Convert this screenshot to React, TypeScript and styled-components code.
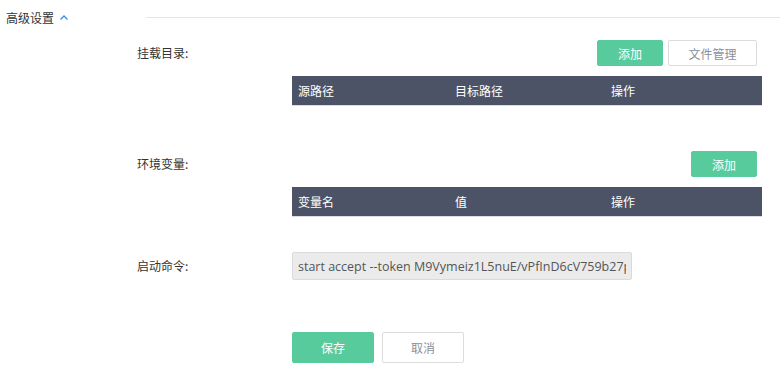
import styled, { createGlobalStyle } from "styled-components";

const GlobalStyle = createGlobalStyle`
    body {
        margin: 0;
        background: #fff;
        font-family: "Noto Sans CJK SC", "Microsoft YaHei", sans-serif;
        color: #333;
    }
`;

const Page = styled.div`
    width: 780px;
    height: 385px;
    overflow: hidden;
`;
const Header = styled.div`
    display: flex;
    align-items: center;
    height: 35px;
`;
const HeaderTitle = styled.div`
    width: 140px;
    padding-left: 6px;
    display: flex;
    align-items: center;
    gap: 5px;
    font-size: 12px;
    color: #333;
    svg {
        width: 10px;
        height: 10px;
    }
`;
const HeaderLine = styled.div`
    flex: 1;
    height: 1px;
    background: #e6e6e6;
    margin-top: -1px;
`;
const Form = styled.div`
    padding-left: 137px;
    width: 625px;
`;
const Row = styled.div<{ $top: number }>`
    display: flex;
    margin-top: ${(p) => p.$top}px;
`;
const Label = styled.div<{ $h: number }>`
    width: 155px;
    flex-shrink: 0;
    height: ${(p) => p.$h}px;
    line-height: ${(p) => p.$h}px;
    font-size: 12px;
    color: #333;
`;
const Content = styled.div`
    width: 470px;
    display: flex;
    flex-direction: column;
`;
const Actions = styled.div`
    display: flex;
    justify-content: flex-end;
    gap: 5px;
    padding-right: 5px;
`;
const Button = styled.button<{ $primary?: boolean; $w: number; $h: number }>`
    width: ${(p) => p.$w}px;
    height: ${(p) => p.$h}px;
    padding: 0;
    border-radius: 2px;
    font-family: inherit;
    font-size: 12px;
    cursor: pointer;
    border: 1px solid ${(p) => (p.$primary ? "#58cb9d" : "#dcdcdc")};
    background: ${(p) => (p.$primary ? "#58cb9d" : "#fff")};
    color: ${(p) => (p.$primary ? "#fff" : "#8a8f99")};
`;
const TableHead = styled.div`
    margin-top: 10px;
    display: grid;
    grid-template-columns: 157px 156px 157px;
    height: 30px;
    background: #4c5366;
    border-bottom: 1px solid #dadde3;
    box-sizing: border-box;
`;
const Th = styled.div`
    padding-left: 6px;
    line-height: 29px;
    font-size: 12px;
    color: #fff;
`;
const CommandInput = styled.input`
    width: 340px;
    height: 28px;
    box-sizing: border-box;
    padding: 0 5px;
    border: 1px solid #dadada;
    border-radius: 2px;
    background: #ebebeb;
    color: #555;
    font-family: "Open Sans", "Segoe UI", sans-serif;
    font-size: 12.5px;
    outline: none;
`;
const Footer = styled.div`
    display: flex;
    gap: 8px;
    margin-top: 52px;
    padding-left: 292px;
`;

const Chevron = () => (
    <svg viewBox="0 0 10 10" fill="none" stroke="#3a8ee6" strokeWidth="1.3">
        <path d="M1.5 6.5 5 3l3.5 3.5" />
    </svg>
);

export default function App() {
    return (
        <Page>
            <GlobalStyle />
            <Header>
                <HeaderTitle>
                    高级设置
                    <Chevron />
                </HeaderTitle>
                <HeaderLine />
            </Header>
            <Form>
                <Row $top={5}>
                    <Label $h={26}>挂载目录:</Label>
                    <Content>
                        <Actions>
                            <Button $primary $w={66} $h={26}>添加</Button>
                            <Button $w={89} $h={26}>文件管理</Button>
                        </Actions>
                        <TableHead>
                            <Th>源路径</Th>
                            <Th>目标路径</Th>
                            <Th>操作</Th>
                        </TableHead>
                    </Content>
                </Row>
                <Row $top={45}>
                    <Label $h={26}>环境变量:</Label>
                    <Content>
                        <Actions>
                            <Button $primary $w={66} $h={26}>添加</Button>
                        </Actions>
                        <TableHead>
                            <Th>变量名</Th>
                            <Th>值</Th>
                            <Th>操作</Th>
                        </TableHead>
                    </Content>
                </Row>
                <Row $top={35}>
                    <Label $h={28}>启动命令:</Label>
                    <Content>
                        <CommandInput
                            readOnly
                            value="start accept --token M9Vymeiz1L5nuE/vPfInD6cV759b27pQx3kW"
                        />
                    </Content>
                </Row>
            </Form>
            <Footer>
                <Button $primary $w={82} $h={31}>保存</Button>
                <Button $w={82} $h={31}>取消</Button>
            </Footer>
        </Page>
    );
}
